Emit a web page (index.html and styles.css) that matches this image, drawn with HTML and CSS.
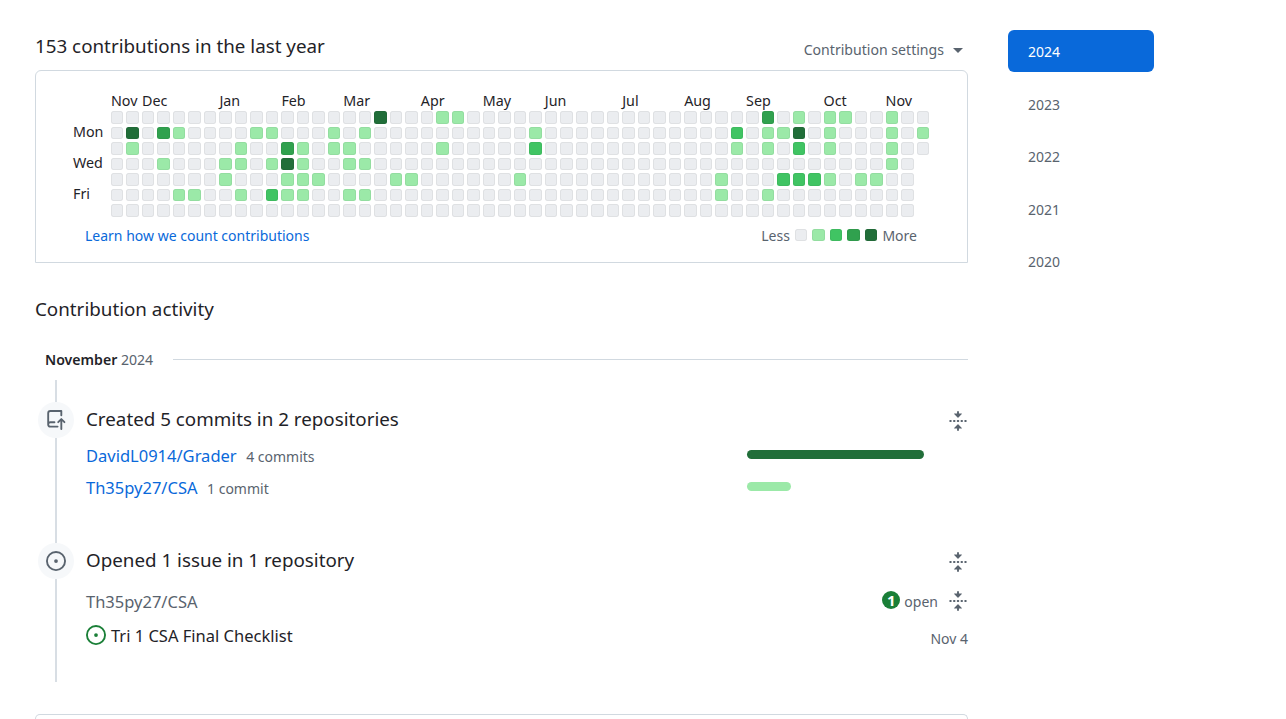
FILE: index.html
```html
<!DOCTYPE html>
<html lang="en">
<head>
    <meta charset="UTF-8">
    <title>Contributions</title>
    <link rel="stylesheet" href="styles.css">
</head>
<body>
    <div class="page">
        <main class="main">
            <div class="graph-head">
                <h2 class="graph-title">153 contributions in the last year</h2>
                <div class="settings">Contribution settings <span class="caret"></span></div>
            </div>

            <div class="graph-card">
                <div class="months">
                    <span class="month m0">Nov</span>
                    <span class="month m2">Dec</span>
                    <span class="month m7">Jan</span>
                    <span class="month m11">Feb</span>
                    <span class="month m15">Mar</span>
                    <span class="month m20">Apr</span>
                    <span class="month m24">May</span>
                    <span class="month m28">Jun</span>
                    <span class="month m33">Jul</span>
                    <span class="month m37">Aug</span>
                    <span class="month m41">Sep</span>
                    <span class="month m46">Oct</span>
                    <span class="month m50">Nov</span>
                </div>
                <div class="graph-body">
                    <div class="days">
                        <span></span><span>Mon</span><span></span><span>Wed</span><span></span><span>Fri</span><span></span>
                    </div>
                    <div class="cells" id="cells"></div>
                </div>
                <div class="graph-foot">
                    <a class="link" href="#">Learn how we count contributions</a>
                    <div class="legend">
                        <span class="legend-text">Less</span>
                        <span class="cell l0"></span>
                        <span class="cell l1"></span>
                        <span class="cell l2"></span>
                        <span class="cell l3"></span>
                        <span class="cell l4"></span>
                        <span class="legend-text">More</span>
                    </div>
                </div>
            </div>

            <h2 class="activity-title">Contribution activity</h2>

            <div class="month-head">
                <h3 class="month-name">November <span class="month-year">2024</span></h3>
                <div class="month-rule"></div>
            </div>

            <div class="rail-stub"></div>

            <section class="entry entry-commits">
                <div class="rail">
                    <div class="badge">
                        <svg width="20" height="20" viewBox="0 0 16 16"><path d="M1 2.5A2.5 2.5 0 0 1 3.5 0h8.75a.75.75 0 0 1 .75.75v3.5a.75.75 0 0 1-1.5 0V1.5h-8a1 1 0 0 0-1 1v6.708A2.486 2.486 0 0 1 3.5 9h3.25a.75.75 0 0 1 0 1.5H3.5a1 1 0 0 0 0 2h5.75a.75.75 0 0 1 0 1.5H3.5A2.5 2.5 0 0 1 1 11.5Zm13.23 7.79h-.001l-1.224-1.224v6.184a.75.75 0 0 1-1.5 0V9.066L10.28 10.29a.75.75 0 0 1-1.06-1.06l2.505-2.504a.75.75 0 0 1 1.06 0L15.29 9.23a.75.75 0 0 1-1.06 1.06Z"/></svg>
                    </div>
                    <div class="rail-line"></div>
                </div>
                <div class="entry-body">
                    <div class="entry-head">
                        <h4 class="entry-title">Created 5 commits in 2 repositories</h4>
                        <svg class="fold" width="20" height="20" viewBox="0 0 16 16"><path d="M10.896 2H8.75V.75a.75.75 0 0 0-1.5 0V2H5.104a.25.25 0 0 0-.177.427l2.896 2.896a.25.25 0 0 0 .354 0l2.896-2.896A.25.25 0 0 0 10.896 2ZM8.75 15.25a.75.75 0 0 1-1.5 0V14H5.104a.25.25 0 0 1-.177-.427l2.896-2.896a.25.25 0 0 1 .354 0l2.896 2.896a.25.25 0 0 1-.177.427H8.75v1.25Zm-6.5-6.5a.75.75 0 0 0 0-1.5h-.5a.75.75 0 0 0 0 1.5h.5ZM6 8a.75.75 0 0 1-.75.75h-.5a.75.75 0 0 1 0-1.5h.5A.75.75 0 0 1 6 8Zm2.25.75a.75.75 0 0 0 0-1.5h-.5a.75.75 0 0 0 0 1.5h.5ZM12 8a.75.75 0 0 1-.75.75h-.5a.75.75 0 0 1 0-1.5h.5A.75.75 0 0 1 12 8Zm2.25.75a.75.75 0 0 0 0-1.5h-.5a.75.75 0 0 0 0 1.5h.5Z"/></svg>
                    </div>
                    <div class="commit-row">
                        <div class="commit-repo"><a class="repo-link" href="#">DavidL0914/Grader</a><span class="commit-count">4 commits</span></div>
                        <div class="bar-wrap"><div class="bar bar-dark"></div></div>
                    </div>
                    <div class="commit-row">
                        <div class="commit-repo"><a class="repo-link" href="#">Th35py27/CSA</a><span class="commit-count">1 commit</span></div>
                        <div class="bar-wrap"><div class="bar bar-light"></div></div>
                    </div>
                </div>
            </section>

            <section class="entry entry-issues">
                <div class="rail">
                    <div class="badge">
                        <svg width="20" height="20" viewBox="0 0 16 16"><path d="M8 9.5a1.5 1.5 0 1 0 0-3 1.5 1.5 0 0 0 0 3Z"/><path d="M8 0a8 8 0 1 1 0 16A8 8 0 0 1 8 0ZM1.5 8a6.5 6.5 0 1 0 13 0 6.5 6.5 0 0 0-13 0Z"/></svg>
                    </div>
                    <div class="rail-line"></div>
                </div>
                <div class="entry-body">
                    <div class="entry-head">
                        <h4 class="entry-title">Opened 1 issue in 1 repository</h4>
                        <svg class="fold" width="20" height="20" viewBox="0 0 16 16"><path d="M10.896 2H8.75V.75a.75.75 0 0 0-1.5 0V2H5.104a.25.25 0 0 0-.177.427l2.896 2.896a.25.25 0 0 0 .354 0l2.896-2.896A.25.25 0 0 0 10.896 2ZM8.75 15.25a.75.75 0 0 1-1.5 0V14H5.104a.25.25 0 0 1-.177-.427l2.896-2.896a.25.25 0 0 1 .354 0l2.896 2.896a.25.25 0 0 1-.177.427H8.75v1.25Zm-6.5-6.5a.75.75 0 0 0 0-1.5h-.5a.75.75 0 0 0 0 1.5h.5ZM6 8a.75.75 0 0 1-.75.75h-.5a.75.75 0 0 1 0-1.5h.5A.75.75 0 0 1 6 8Zm2.25.75a.75.75 0 0 0 0-1.5h-.5a.75.75 0 0 0 0 1.5h.5ZM12 8a.75.75 0 0 1-.75.75h-.5a.75.75 0 0 1 0-1.5h.5A.75.75 0 0 1 12 8Zm2.25.75a.75.75 0 0 0 0-1.5h-.5a.75.75 0 0 0 0 1.5h.5Z"/></svg>
                    </div>
                    <div class="issue-repo-row">
                        <span class="issue-repo">Th35py27/CSA</span>
                        <div class="issue-state">
                            <span class="count-dot">1</span>
                            <span class="open-text">open</span>
                            <svg class="fold" width="20" height="20" viewBox="0 0 16 16"><path d="M10.896 2H8.75V.75a.75.75 0 0 0-1.5 0V2H5.104a.25.25 0 0 0-.177.427l2.896 2.896a.25.25 0 0 0 .354 0l2.896-2.896A.25.25 0 0 0 10.896 2ZM8.75 15.25a.75.75 0 0 1-1.5 0V14H5.104a.25.25 0 0 1-.177-.427l2.896-2.896a.25.25 0 0 1 .354 0l2.896 2.896a.25.25 0 0 1-.177.427H8.75v1.25Zm-6.5-6.5a.75.75 0 0 0 0-1.5h-.5a.75.75 0 0 0 0 1.5h.5ZM6 8a.75.75 0 0 1-.75.75h-.5a.75.75 0 0 1 0-1.5h.5A.75.75 0 0 1 6 8Zm2.25.75a.75.75 0 0 0 0-1.5h-.5a.75.75 0 0 0 0 1.5h.5ZM12 8a.75.75 0 0 1-.75.75h-.5a.75.75 0 0 1 0-1.5h.5A.75.75 0 0 1 12 8Zm2.25.75a.75.75 0 0 0 0-1.5h-.5a.75.75 0 0 0 0 1.5h.5Z"/></svg>
                        </div>
                    </div>
                    <div class="issue-row">
                        <div class="issue-name">
                            <svg class="issue-icon" width="20" height="20" viewBox="0 0 16 16"><path d="M8 9.5a1.5 1.5 0 1 0 0-3 1.5 1.5 0 0 0 0 3Z"/><path d="M8 0a8 8 0 1 1 0 16A8 8 0 0 1 8 0ZM1.5 8a6.5 6.5 0 1 0 13 0 6.5 6.5 0 0 0-13 0Z"/></svg>
                            <span>Tri 1 CSA Final Checklist</span>
                        </div>
                        <time class="issue-date">Nov 4</time>
                    </div>
                </div>
            </section>

            <div class="next-card"></div>
        </main>

        <nav class="years">
            <a class="year year-active" href="#">2024</a>
            <a class="year" href="#">2023</a>
            <a class="year" href="#">2022</a>
            <a class="year" href="#">2021</a>
            <a class="year" href="#">2020</a>
        </nav>
    </div>

    <script src="script.js"></script>
</body>
</html>
```

FILE: styles.css
```css
* {
    box-sizing: border-box;
}
body {
    margin: 0;
    font-family: "Noto Sans", "Open Sans", Arial, sans-serif;
    color: #1f2328;
    background-color: #fff;
}
h2, h3, h4 {
    margin: 0;
    font-weight: 400;
}
a {
    text-decoration: none;
}
.page {
    display: flex;
    align-items: flex-start;
    height: 719px;
    overflow: hidden;
    padding-left: 35px;
}
.main {
    width: 933px;
    flex-shrink: 0;
}

/* contribution graph */
.graph-head {
    display: flex;
    justify-content: space-between;
    align-items: center;
    height: 70px;
    padding-top: 22px;
}
.graph-title {
    font-size: 18.8px;
    line-height: 28px;
}
.settings {
    display: flex;
    align-items: center;
    gap: 9px;
    padding-right: 5px;
    margin-top: 6px;
    font-size: 14.1px;
    color: #59636e;
}
.caret {
    width: 0;
    height: 0;
    border-left: 5px solid transparent;
    border-right: 5px solid transparent;
    border-top: 5px solid #59636e;
    margin-top: 2px;
}
.graph-card {
    height: 193px;
    border: 1px solid #d1d9e0;
    border-radius: 6px 6px 0 0;
    padding: 21px 38px 0 37px;
}
.months {
    display: grid;
    grid-template-columns: repeat(53, 1fr);
    column-gap: 3px;
    height: 19px;
    margin-left: 38px;
    font-size: 14.3px;
    line-height: 17px;
}
.month {
    grid-row: 1;
    white-space: nowrap;
}
.m0 { grid-column: 1 / span 2; }
.m2 { grid-column: 3 / span 3; }
.m7 { grid-column: 8 / span 3; }
.m11 { grid-column: 12 / span 3; }
.m15 { grid-column: 16 / span 3; }
.m20 { grid-column: 21 / span 3; }
.m24 { grid-column: 25 / span 3; }
.m28 { grid-column: 29 / span 3; }
.m33 { grid-column: 34 / span 3; }
.m37 { grid-column: 38 / span 3; }
.m41 { grid-column: 42 / span 3; }
.m46 { grid-column: 47 / span 3; }
.m50 { grid-column: 51 / span 3; }
.graph-body {
    display: flex;
}
.days {
    display: grid;
    grid-template-rows: repeat(7, 12.5px);
    row-gap: 3px;
    width: 38px;
    font-size: 14.3px;
    line-height: 10.5px;
}
.days span {
    white-space: nowrap;
}
.cells {
    flex: 1;
    display: grid;
    grid-auto-flow: column;
    grid-template-rows: repeat(7, 12.5px);
    grid-template-columns: repeat(53, 1fr);
    gap: 3px;
}
.cell {
    display: block;
    border-radius: 2.5px;
    outline: 1px solid rgba(27, 31, 35, 0.06);
    outline-offset: -1px;
}
.l0 { background-color: #ebedf0; }
.l1 { background-color: #9be9a8; }
.l2 { background-color: #40c463; }
.l3 { background-color: #30a14e; }
.l4 { background-color: #216e39; }
.graph-foot {
    display: flex;
    justify-content: space-between;
    align-items: center;
    margin-top: 9px;
    padding-left: 12px;
    font-size: 14px;
}
.link {
    color: #0969da;
}
.legend {
    display: flex;
    align-items: center;
    gap: 5px;
    margin-right: 12px;
}
.legend .cell {
    width: 12.5px;
    height: 12.5px;
}
.legend-text {
    color: #59636e;
}

/* activity */
.activity-title {
    margin-top: 32px;
    font-size: 18.8px;
    line-height: 28px;
}
.month-head {
    display: flex;
    align-items: center;
    gap: 20px;
    margin-top: 22px;
    padding-left: 10px;
    height: 28px;
}
.month-name {
    font-size: 14.1px;
    font-weight: 600;
    white-space: nowrap;
}
.month-year {
    font-weight: 400;
    color: #59636e;
}
.month-rule {
    flex: 1;
    height: 1px;
    background-color: #d1d9e0;
}
.rail-stub {
    width: 2px;
    height: 22px;
    margin-top: 7px;
    margin-left: 20px;
    background-color: #d8dee4;
}
.entry {
    display: flex;
    margin-left: 3px;
}
.entry-commits {
    height: 141px;
}
.entry-issues {
    height: 139px;
}
.rail {
    display: flex;
    flex-direction: column;
    align-items: center;
    width: 36px;
    flex-shrink: 0;
}
.badge {
    display: flex;
    align-items: center;
    justify-content: center;
    width: 36px;
    height: 36px;
    border-radius: 50%;
    background-color: #f6f8fa;
    fill: #59636e;
}
.rail-line {
    flex: 1;
    width: 2px;
    background-color: #d8dee4;
}
.entry-body {
    flex: 1;
    margin-left: 12px;
}
.entry-head {
    display: flex;
    justify-content: space-between;
    align-items: center;
    height: 36px;
}
.entry-title {
    margin-top: -2px;
    font-size: 18.8px;
}
.fold {
    display: block;
    flex-shrink: 0;
    fill: #59636e;
}
.entry-head .fold {
    margin-top: 2px;
}
.commit-row {
    display: flex;
    justify-content: space-between;
    align-items: center;
    height: 32px;
}
.commit-repo {
    display: flex;
    align-items: baseline;
    gap: 9.5px;
    margin-top: 2px;
}
.repo-link {
    font-size: 16.5px;
    color: #0969da;
}
.commit-count {
    font-size: 14px;
    color: #59636e;
}
.bar-wrap {
    width: 221px;
}
.bar {
    height: 9px;
    border-radius: 5px;
}
.bar-dark {
    width: 177px;
    background-color: #216e39;
}
.bar-light {
    width: 44px;
    background-color: #9be9a8;
}
.issue-repo-row {
    display: flex;
    justify-content: space-between;
    align-items: center;
    height: 32px;
    margin-top: 6px;
}
.issue-repo {
    font-size: 16.5px;
    color: #59636e;
}
.issue-state {
    display: flex;
    align-items: center;
    gap: 4px;
}
.count-dot {
    display: flex;
    align-items: center;
    justify-content: center;
    width: 18px;
    height: 18px;
    margin-top: -2px;
    border-radius: 50%;
    background-color: #1a7f37;
    color: #fff;
    font-size: 15px;
    font-weight: 700;
}
.open-text {
    margin-right: 6px;
    font-size: 14px;
    color: #59636e;
}
.issue-row {
    display: flex;
    justify-content: space-between;
    align-items: center;
    height: 36px;
}
.issue-name {
    display: flex;
    align-items: center;
    gap: 5px;
    font-size: 16.5px;
}
.issue-icon {
    fill: #1a7f37;
}
.issue-date {
    font-size: 14px;
    color: #59636e;
    margin-top: 6px;
}
.next-card {
    height: 5px;
    margin-top: 32px;
    border: 1px solid #d1d9e0;
    border-bottom: none;
    border-radius: 6px 6px 0 0;
}

/* year list */
.years {
    display: flex;
    flex-direction: column;
    width: 146px;
    margin-top: 30px;
    margin-left: 40px;
}
.year {
    display: block;
    height: 52.5px;
    padding: 0 20px;
    font-size: 14px;
    line-height: 43px;
    color: #59636e;
}
.year-active {
    height: 42px;
    margin-bottom: 10.5px;
    border-radius: 6px;
    background-color: #0969da;
    color: #fff;
}
```

FILE: script.js
```js
// filled days: row -> { week: level }, everything else is level 0
const filled = [
    { 17: 4, 21: 1, 22: 1, 42: 3, 44: 1, 46: 1, 47: 1, 50: 1 },
    { 1: 4, 3: 3, 4: 1, 9: 1, 10: 1, 14: 1, 16: 1, 27: 1, 40: 2, 42: 1, 43: 1, 44: 4, 46: 1, 50: 1, 52: 1 },
    { 1: 1, 8: 1, 11: 3, 12: 1, 14: 1, 15: 1, 21: 1, 27: 2, 40: 1, 42: 1, 44: 2, 46: 1, 50: 1 },
    { 3: 1, 7: 1, 8: 1, 10: 1, 11: 4, 12: 1, 15: 1, 16: 1, 50: 1 },
    { 7: 1, 11: 1, 12: 1, 13: 1, 18: 1, 19: 1, 26: 1, 39: 1, 43: 2, 44: 2, 45: 2, 46: 1, 48: 1, 49: 1 },
    { 4: 1, 5: 1, 8: 1, 10: 2, 11: 1, 12: 1, 15: 1, 16: 1, 39: 1, 42: 1 },
    {}
];

const cells = document.getElementById('cells');

for (let week = 0; week < 53; week++) {
    // the last week stops on Tuesday
    const days = week === 52 ? 3 : 7;
    for (let day = 0; day < days; day++) {
        const cell = document.createElement('span');
        cell.className = 'cell l' + (filled[day][week] || 0);
        cells.appendChild(cell);
    }
}
```
